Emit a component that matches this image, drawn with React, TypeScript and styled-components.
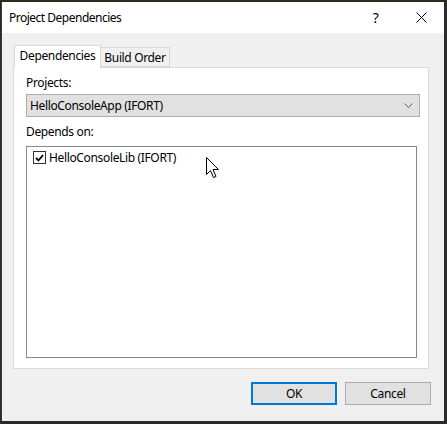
import React from "react";
import styled, { createGlobalStyle } from "styled-components";

const Global = createGlobalStyle`
  html, body { margin: 0; padding: 0; background: #262626; }
  body { font-family: "Segoe UI", "Noto Sans", sans-serif; font-size: 12px; color: #000; letter-spacing: -0.35px; }
`;

const Screen = styled.div`
  width: 447px;
  height: 424px;
  box-sizing: border-box;
  padding: 2px 3px 3px 1px;
  background: linear-gradient(#25301f 0 2px, #2a2a2a 2px);
  position: relative;
  overflow: hidden;
`;

const Window = styled.div`
  width: 443px;
  height: 419px;
  display: flex;
  flex-direction: column;
  background: #f0f0f0;
  border-left: 1px solid #3a3a3a;
  box-sizing: border-box;
`;

const TitleBar = styled.div`
  height: 31px;
  flex: none;
  background: #ffffff;
  display: flex;
  align-items: center;
`;

const Title = styled.div`
  flex: 1;
  padding-left: 7px;
  font-size: 12px;
  letter-spacing: -0.5px;
  padding-bottom: 1px;
`;

const CaptionButton = styled.div<{ $w: number }>`
  width: ${(p) => p.$w}px;
  height: 31px;
  display: flex;
  align-items: center;
  justify-content: center;
  font-size: 14px;
`;

const Body = styled.div`
  flex: 1;
  display: flex;
  flex-direction: column;
  padding: 13px 13px 15px 11px;
`;

const TabRow = styled.div`
  display: flex;
  align-items: flex-end;
  height: 22px;
  padding-left: 1px;
  margin-bottom: -1px;
  position: relative;
  z-index: 1;
`;

const Tab = styled.div<{ $active?: boolean }>`
  box-sizing: border-box;
  height: ${(p) => (p.$active ? 23 : 20)}px;
  width: ${(p) => (p.$active ? 87 : 69)}px;
  border: 1px solid #d9d9d9;
  border-bottom: ${(p) => (p.$active ? "none" : "1px solid #d9d9d9")};
  border-left: ${(p) => (p.$active ? "1px solid #d9d9d9" : "none")};
  background: ${(p) => (p.$active ? "#ffffff" : "#f0f0f0")};
  display: flex;
  align-items: center;
  justify-content: center;
  padding-bottom: ${(p) => (p.$active ? 3 : 0)}px;
  align-self: flex-end;
  margin-bottom: ${(p) => (p.$active ? 0 : 1)}px;
`;

const Panel = styled.div`
  box-sizing: border-box;
  width: 416px;
  height: 302px;
  background: #ffffff;
  border: 1px solid #d9d9d9;
  padding: 7px 0 0 12px;
  display: flex;
  flex-direction: column;
`;

const Label = styled.div<{ $mt?: number }>`
  line-height: 16px;
  height: 16px;
  margin-top: ${(p) => p.$mt ?? 0}px;
`;

const Combo = styled.div`
  box-sizing: border-box;
  margin-top: 3px;
  width: 394px;
  height: 23px;
  background: #e1e1e1;
  border: 1px solid #adadad;
  display: flex;
  align-items: center;
  padding: 0 6px 0 3px;
`;

const ComboText = styled.div`
  flex: 1;
  padding-bottom: 1px;
`;

const List = styled.div`
  box-sizing: border-box;
  margin-top: 6px;
  width: 391px;
  height: 212px;
  border: 1px solid #828790;
  background: #ffffff;
  padding: 2px 6px;
`;

const ListRow = styled.div`
  display: flex;
  align-items: center;
  height: 17px;
  gap: 3px;
`;

const CheckBox = styled.div`
  box-sizing: border-box;
  width: 13px;
  height: 13px;
  border: 1px solid #333333;
  background: #ffffff;
  display: flex;
  align-items: center;
  justify-content: center;
`;

const ButtonRow = styled.div`
  display: flex;
  justify-content: flex-end;
  gap: 8px;
  margin-top: 13px;
`;

const Button = styled.div<{ $default?: boolean }>`
  box-sizing: border-box;
  width: 86px;
  height: 23px;
  background: #e1e1e1;
  border: ${(p) => (p.$default ? "2px solid #0078d7" : "1px solid #adadad")};
  display: flex;
  align-items: center;
  justify-content: center;
  padding-bottom: 1px;
`;

const Cursor = styled.svg`
  position: absolute;
  left: 206px;
  top: 157px;
`;

export default function App() {
  return (
    <>
      <Global />
      <Screen>
        <Window>
          <TitleBar>
            <Title>Project Dependencies</Title>
            <CaptionButton $w={45}>?</CaptionButton>
            <CaptionButton $w={46}>
              <svg width="11" height="11" viewBox="0 0 11 11">
                <path d="M0.5 0.5 L10.5 10.5 M10.5 0.5 L0.5 10.5" stroke="#000" strokeWidth="1" fill="none" />
              </svg>
            </CaptionButton>
          </TitleBar>
          <Body>
            <TabRow>
              <Tab $active>Dependencies</Tab>
              <Tab>Build Order</Tab>
            </TabRow>
            <Panel>
              <Label>Projects:</Label>
              <Combo>
                <ComboText>HelloConsoleApp (IFORT)</ComboText>
                <svg width="9" height="5" viewBox="0 0 9 5">
                  <path d="M0.5 0.5 L4.5 4.5 L8.5 0.5" stroke="#555" strokeWidth="1" fill="none" />
                </svg>
              </Combo>
              <Label $mt={7}>Depends on:</Label>
              <List>
                <ListRow>
                  <CheckBox>
                    <svg width="9" height="8" viewBox="0 0 9 8">
                      <path d="M1 4 L3.5 6.5 L8 1" stroke="#000" strokeWidth="1.8" fill="none" />
                    </svg>
                  </CheckBox>
                  <span>HelloConsoleLib (IFORT)</span>
                </ListRow>
              </List>
            </Panel>
            <ButtonRow>
              <Button $default>OK</Button>
              <Button>Cancel</Button>
            </ButtonRow>
          </Body>
        </Window>
        <Cursor width="13" height="22" viewBox="0 0 13 22">
          <path
            d="M0.5 0.5 L0.5 17.5 L4.5 13.5 L7.5 20.5 L10 19.5 L7 12.5 L12.5 12.5 Z"
            fill="#ffffff"
            stroke="#000000"
            strokeWidth="1"
          />
        </Cursor>
      </Screen>
    </>
  );
}
